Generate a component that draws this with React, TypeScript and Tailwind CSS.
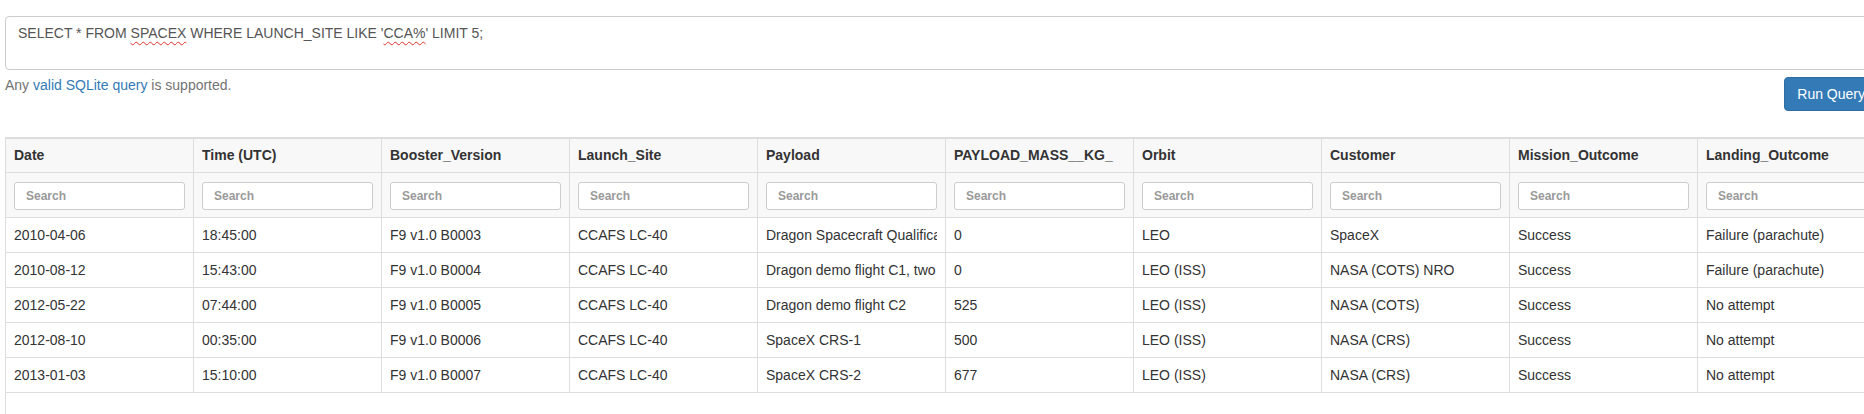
const COLUMNS = [
  "Date",
  "Time (UTC)",
  "Booster_Version",
  "Launch_Site",
  "Payload",
  "PAYLOAD_MASS__KG_",
  "Orbit",
  "Customer",
  "Mission_Outcome",
  "Landing_Outcome",
];

const ROWS = [
  ["2010-04-06", "18:45:00", "F9 v1.0 B0003", "CCAFS LC-40", "Dragon Spacecraft Qualification Unit", "0", "LEO", "SpaceX", "Success", "Failure (parachute)"],
  ["2010-08-12", "15:43:00", "F9 v1.0 B0004", "CCAFS LC-40", "Dragon demo flight C1, two CubeSats, barrel of Brouere cheese", "0", "LEO (ISS)", "NASA (COTS) NRO", "Success", "Failure (parachute)"],
  ["2012-05-22", "07:44:00", "F9 v1.0 B0005", "CCAFS LC-40", "Dragon demo flight C2", "525", "LEO (ISS)", "NASA (COTS)", "Success", "No attempt"],
  ["2012-08-10", "00:35:00", "F9 v1.0 B0006", "CCAFS LC-40", "SpaceX CRS-1", "500", "LEO (ISS)", "NASA (CRS)", "Success", "No attempt"],
  ["2013-01-03", "15:10:00", "F9 v1.0 B0007", "CCAFS LC-40", "SpaceX CRS-2", "677", "LEO (ISS)", "NASA (CRS)", "Success", "No attempt"],
];

function Squiggle({ children }: { children: string }) {
  return (
    <span className="underline decoration-wavy decoration-[#e0302a] decoration-1 underline-offset-[3px]">
      {children}
    </span>
  );
}

function QueryBox() {
  return (
    <div className="w-[1873px]">
      <div className="h-[54px] rounded-[4px] border border-[#ccc] bg-white px-3 py-[6px] text-[14px] leading-5 text-[#555]">
        SELECT * FROM <Squiggle>SPACEX</Squiggle> WHERE LAUNCH_SITE LIKE '<Squiggle>CCA%</Squiggle>' LIMIT 5;
      </div>
      <div className="mt-[5px] flex items-start justify-between">
        <p className="text-[14px] leading-5 text-[#737373]">
          Any <span className="text-[#337ab7]">valid SQLite query</span> is supported.
        </p>
        <button className="mt-[2px] h-[34px] rounded-[4px] border border-[#2e6da4] bg-[#337ab7] px-3 text-[14px] text-white">
          Run Query
        </button>
      </div>
    </div>
  );
}

function ResultsTable() {
  return (
    <div className="mt-[26px] h-[300px] w-[1881px] border-t-2 border-l border-[#dddddd]">
      <table className="w-[1880px] table-fixed border-separate border-spacing-0 text-[14px] text-[#333]">
        <thead className="bg-[#f8f8f8]">
          <tr>
            {COLUMNS.map((col) => (
              <th
                key={col}
                className="h-[34px] border-r border-b border-[#dddddd] px-2 py-0 text-left align-middle font-bold"
              >
                <div className="overflow-hidden whitespace-nowrap">{col}</div>
              </th>
            ))}
          </tr>
          <tr>
            {COLUMNS.map((col) => (
              <th key={`f-${col}`} className="h-[45px] border-r border-b border-[#dddddd] px-2 py-0 align-middle">
                <input
                  placeholder="Search"
                  className="mt-px h-[28px] w-full rounded-[3px] border border-[#ccc] bg-white px-[11px] text-[12px] font-bold text-[#555] placeholder:text-[#999] outline-none"
                />
              </th>
            ))}
          </tr>
        </thead>
        <tbody>
          {ROWS.map((row, i) => (
            <tr key={i}>
              {row.map((cell, j) => (
                <td key={j} className="h-[35px] border-r border-b border-[#dddddd] px-2 py-0 align-middle">
                  <div className="overflow-hidden whitespace-nowrap">{cell}</div>
                </td>
              ))}
            </tr>
          ))}
        </tbody>
      </table>
    </div>
  );
}

export default function App() {
  return (
    <div className="h-[414px] w-[1864px] overflow-hidden bg-white font-['Liberation_Sans',Arial,sans-serif]">
      <div className="pt-4 pl-[5px]">
        <QueryBox />
        <ResultsTable />
      </div>
    </div>
  );
}
